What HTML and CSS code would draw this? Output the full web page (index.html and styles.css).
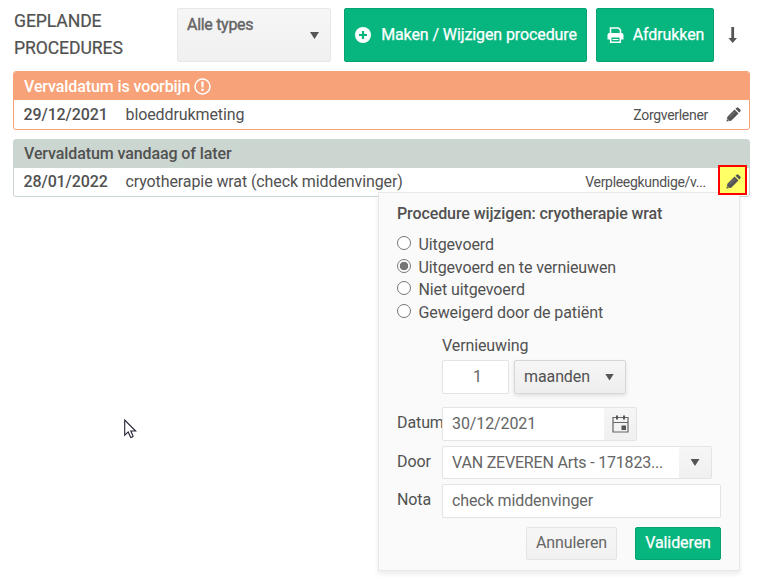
FILE: index.html
```html
<!DOCTYPE html>
<html lang="nl">
<head>
    <meta charset="UTF-8">
    <title>Geplande procedures</title>
    <link rel="stylesheet" href="styles.css">
</head>
<body>
    <div class="toolbar">
        <h1>GEPLANDE PROCEDURES</h1>
        <div class="type-select">
            <span>Alle types</span>
            <span class="caret"></span>
        </div>
        <button class="btn primary create">
            <svg width="16" height="16" viewBox="0 0 16 16"><circle cx="8" cy="8" r="8" fill="#fff"/><path d="M8 4v8M4 8h8" stroke="#07b57f" stroke-width="2.2"/></svg>
            <span>Maken / Wijzigen procedure</span>
        </button>
        <button class="btn primary print">
            <svg width="17" height="16" viewBox="0 0 17 16"><path d="M3.5 7V1h8l2 2v4" fill="none" stroke="#fff" stroke-width="1.5"/><path d="M2.5 6h12a2 2 0 0 1 2 2v4.5h-3V10h-10v2.5h-3V8a2 2 0 0 1 2-2z" fill="#fff"/><path d="M3.7 9.8h9.6v5.4H3.7z" fill="#07b57f" stroke="#fff" stroke-width="1.5"/><path d="M5.5 12.5h6" stroke="#fff"/></svg>
            <span>Afdrukken</span>
        </button>
        <svg class="sort" width="10" height="16" viewBox="0 0 10 16"><path d="M3.3 0h2.8v11H9L4.7 16 .4 11h2.9z" fill="#555"/></svg>
    </div>

    <div class="panel overdue">
        <div class="panel-header">
            <span>Vervaldatum is voorbijn</span>
            <svg width="17" height="17" viewBox="0 0 17 17"><circle cx="8.5" cy="8.5" r="7.5" fill="none" stroke="#fff" stroke-width="1.5"/><path d="M7.2 3.6h2.6l-.4 6H7.6zM7.3 10.8h2.4v2.2H7.3z" fill="#fff"/></svg>
        </div>
        <div class="row">
            <span class="date">29/12/2021</span>
            <span class="name">bloeddrukmeting</span>
            <span class="role">Zorgverlener</span>
            <span class="edit">
                <svg width="15" height="15" viewBox="0 0 15 15"><path d="M0.4 14.6 1.4 9.8 8.6 2.6l3.9 3.9L5.2 13.7z M9.5 1.8l1.1-1.1q.9-.8 1.8 0l1.9 1.9q.8.9 0 1.8l-1.1 1.1z" fill="#555"/><path d="M3.4 10.3 9 4.7" stroke="#999" stroke-width=".6"/><path d="M1.5 12.3l1.3 1.3" stroke="#fff" stroke-width=".8"/></svg>
            </span>
        </div>
    </div>

    <div class="panel upcoming">
        <div class="panel-header">
            <span>Vervaldatum vandaag of later</span>
        </div>
        <div class="row">
            <span class="date">28/01/2022</span>
            <span class="name">cryotherapie wrat (check middenvinger)</span>
            <span class="role">Verpleegkundige/v...</span>
            <span class="edit active">
                <svg width="15" height="15" viewBox="0 0 15 15"><path d="M0.4 14.6 1.4 9.8 8.6 2.6l3.9 3.9L5.2 13.7z M9.5 1.8l1.1-1.1q.9-.8 1.8 0l1.9 1.9q.8.9 0 1.8l-1.1 1.1z" fill="#555"/><path d="M3.4 10.3 9 4.7" stroke="#999" stroke-width=".6"/><path d="M1.5 12.3l1.3 1.3" stroke="#ff6" stroke-width=".8"/></svg>
            </span>
        </div>
    </div>

    <!-- Edit popup -->
    <div class="popup">
        <h2>Procedure wijzigen: cryotherapie wrat</h2>
        <div class="options">
            <label><i class="radio"></i>Uitgevoerd</label>
            <label><i class="radio checked"></i>Uitgevoerd en te vernieuwen</label>
            <label><i class="radio"></i>Niet uitgevoerd</label>
            <label><i class="radio"></i>Geweigerd door de patiënt</label>
        </div>
        <div class="renewal">
            <div class="renewal-title">Vernieuwing</div>
            <div class="renewal-fields">
                <div class="field amount">1</div>
                <div class="unit"><span>maanden</span><span class="caret"></span></div>
            </div>
        </div>
        <div class="form-row">
            <span class="form-label">Datum</span>
            <div class="field date-field">
                <span class="value">30/12/2021</span>
                <span class="addon">
                    <svg width="17" height="18" viewBox="0 0 17 18"><path d="M1 2.5h15v14.5H1zM1 7.5h15" fill="none" stroke="#666" stroke-width="1.2"/><path d="M4 .5h2v4H4zM11 .5h2v4h-2zM9.5 10.5h4.5v4.5H9.5z" fill="#555"/></svg>
                </span>
            </div>
        </div>
        <div class="form-row by-row">
            <span class="form-label">Door</span>
            <div class="field by-field">
                <span class="value">VAN ZEVEREN Arts - 171823...</span>
                <span class="addon"><span class="caret"></span></span>
            </div>
        </div>
        <div class="form-row">
            <span class="form-label">Nota</span>
            <div class="field note-field"><span class="value">check middenvinger</span></div>
        </div>
        <div class="actions">
            <button class="btn cancel">Annuleren</button>
            <button class="btn primary">Valideren</button>
        </div>
    </div>

    <svg class="cursor" width="13" height="20" viewBox="0 0 13 20"><path d="M.7 1v15.2l3.5-3.3 2.4 5.3q1.7.5 2.5-1L6.8 12h4.9z" fill="#fff" stroke="#223" stroke-width="1.1"/></svg>
</body>
</html>
```
FILE: styles.css
```css
* {
    box-sizing: border-box;
}
body {
    position: relative;
    margin: 0;
    padding: 8px 9px 0 13px;
    height: 577px;
    overflow: hidden;
    background: #fff;
    color: #515151;
    font-family: Roboto, sans-serif;
    font-size: 16px;
    line-height: 20px;
    letter-spacing: -0.1px;
}
svg {
    display: block;
    flex: none;
}
.toolbar {
    display: flex;
    height: 54px;
    margin-bottom: 9px;
}
h1 {
    width: 164px;
    margin: 0;
    padding: 0 40px 0 1px;
    font-size: 17.6px;
    line-height: 27px;
    font-weight: 400;
    -webkit-text-stroke: 0.2px;
}
.type-select {
    display: flex;
    justify-content: space-between;
    width: 154px;
    margin-right: 13px;
    padding: 6px 11px 0 9px;
    border: 1px solid #e8e8e8;
    border-radius: 2px;
    background: linear-gradient(#f6f6f6, #f0f0f0);
    color: #656565;
    letter-spacing: -0.3px;
    -webkit-text-stroke: 0.4px;
}
.type-select .caret {
    margin-top: 17px;
}
.caret {
    width: 9px;
    height: 7px;
    background: #555;
    clip-path: polygon(0 0, 100% 0, 50% 100%);
}
.btn {
    display: flex;
    align-items: center;
    justify-content: center;
    padding: 0;
    border: 1px solid #e4e4e4;
    border-radius: 2px;
    background: linear-gradient(#f6f6f6, #f1f1f1);
    color: #656565;
    font: inherit;
    letter-spacing: -0.1px;
}
.btn.primary {
    border-color: #06a271;
    background: #07b57f;
    color: #fff;
    -webkit-text-stroke: 0.25px;
}
.create {
    width: 243px;
    margin-right: 9px;
    padding-left: 1px;
    gap: 10px;
}
.print {
    width: 118px;
    margin-right: 14px;
    padding-left: 1px;
    gap: 9px;
}
.sort {
    margin-top: 19px;
}
.panel {
    border: 1px solid;
    border-radius: 3px;
    overflow: hidden;
}
.panel-header {
    display: flex;
    align-items: center;
    gap: 4px;
    height: 28px;
    padding: 1px 9px 0 10px;
    font-weight: 500;
}
.overdue {
    height: 59px;
    margin-bottom: 9px;
    border-color: #f7a278;
}
.overdue .panel-header {
    background: #f7a278;
    color: #fff;
}
.upcoming {
    height: 58px;
    border-color: #ccd6d0;
    overflow: visible;
}
.upcoming .panel-header {
    padding-top: 0;
    padding-bottom: 1px;
    background: #ccd6d0;
}
.row {
    display: flex;
    align-items: center;
    height: 29px;
    padding-left: 9.5px;
}
.upcoming .row {
    height: 28px;
}
.date {
    width: 102px;
    font-weight: 500;
}
.name {
    flex: 1;
}
.role {
    font-size: 14px;
    letter-spacing: -0.3px;
}
.edit {
    display: flex;
    align-items: center;
    justify-content: center;
    width: 29px;
    height: 30px;
    margin: 0 1px 0 11px;
}
.edit.active {
    position: relative;
    z-index: 2;
    margin: -4px 2px 0 12px;
    padding: 3px 0 0 2px;
    border: 2px solid #f00;
    background: #ff6;
}
.popup {
    position: absolute;
    left: 378px;
    top: 192px;
    z-index: 1;
    width: 362px;
    height: 379px;
    padding: 11px 18px 0;
    border: 1px solid #e8e8e8;
    background: #fafafa;
    box-shadow: 0 3px 5px rgba(0, 0, 0, 0.08);
}
h2 {
    margin: 0 0 10px;
    font-size: 16px;
    font-weight: 500;
    line-height: 20px;
}
.options {
    height: 91px;
}
.options label {
    display: flex;
    align-items: center;
    gap: 7.5px;
    height: 22.5px;
}
.radio {
    flex: none;
    width: 14px;
    height: 14px;
    margin-top: -4px;
    border: 1px solid #767676;
    border-radius: 50%;
    background: #fff;
}
.radio.checked {
    background: radial-gradient(circle, #767676 3.9px, #fff 4.6px);
}
.renewal {
    margin-left: 45px;
    padding-top: 11px;
}
.renewal-title {
    margin-bottom: 4px;
}
.renewal-fields {
    display: flex;
    gap: 5px;
    margin-bottom: 13px;
}
.field {
    display: flex;
    align-items: center;
    height: 34px;
    border: 1px solid #e4e4e4;
    border-radius: 2px;
    background: #fff;
    color: #656565;
}
.amount {
    justify-content: center;
    width: 67px;
    padding-left: 4px;
}
.unit {
    display: flex;
    align-items: center;
    justify-content: space-between;
    width: 112px;
    height: 34px;
    padding: 0 11px 0 9px;
    border: 1px solid #d6d6d6;
    border-radius: 2px;
    background: linear-gradient(#f6f6f6, #eee);
    box-shadow: 0 2px 4px rgba(0, 0, 0, 0.1);
}
.form-row {
    display: flex;
    height: 34px;
    margin-bottom: 5px;
}
.form-label {
    width: 45px;
    padding-top: 6px;
}
.value {
    flex: 1;
    padding-left: 9px;
    white-space: nowrap;
}
.addon {
    display: flex;
    align-items: center;
    justify-content: center;
    width: 32px;
    height: 100%;
    background: linear-gradient(#f6f6f6, #f0f0f0);
}
.date-field {
    width: 195px;
}
.by-row {
    height: 33px;
}
.by-field {
    width: 270px;
    height: 33px;
    letter-spacing: -0.19px;
}
.note-field {
    width: 279px;
}
.actions {
    display: flex;
    justify-content: flex-end;
    gap: 18px;
    padding-top: 4px;
}
.actions .btn {
    width: 86px;
    height: 33px;
    padding-bottom: 2px;
}
.actions .cancel {
    width: 91px;
}
.cursor {
    position: absolute;
    left: 124px;
    top: 419px;
}
```
